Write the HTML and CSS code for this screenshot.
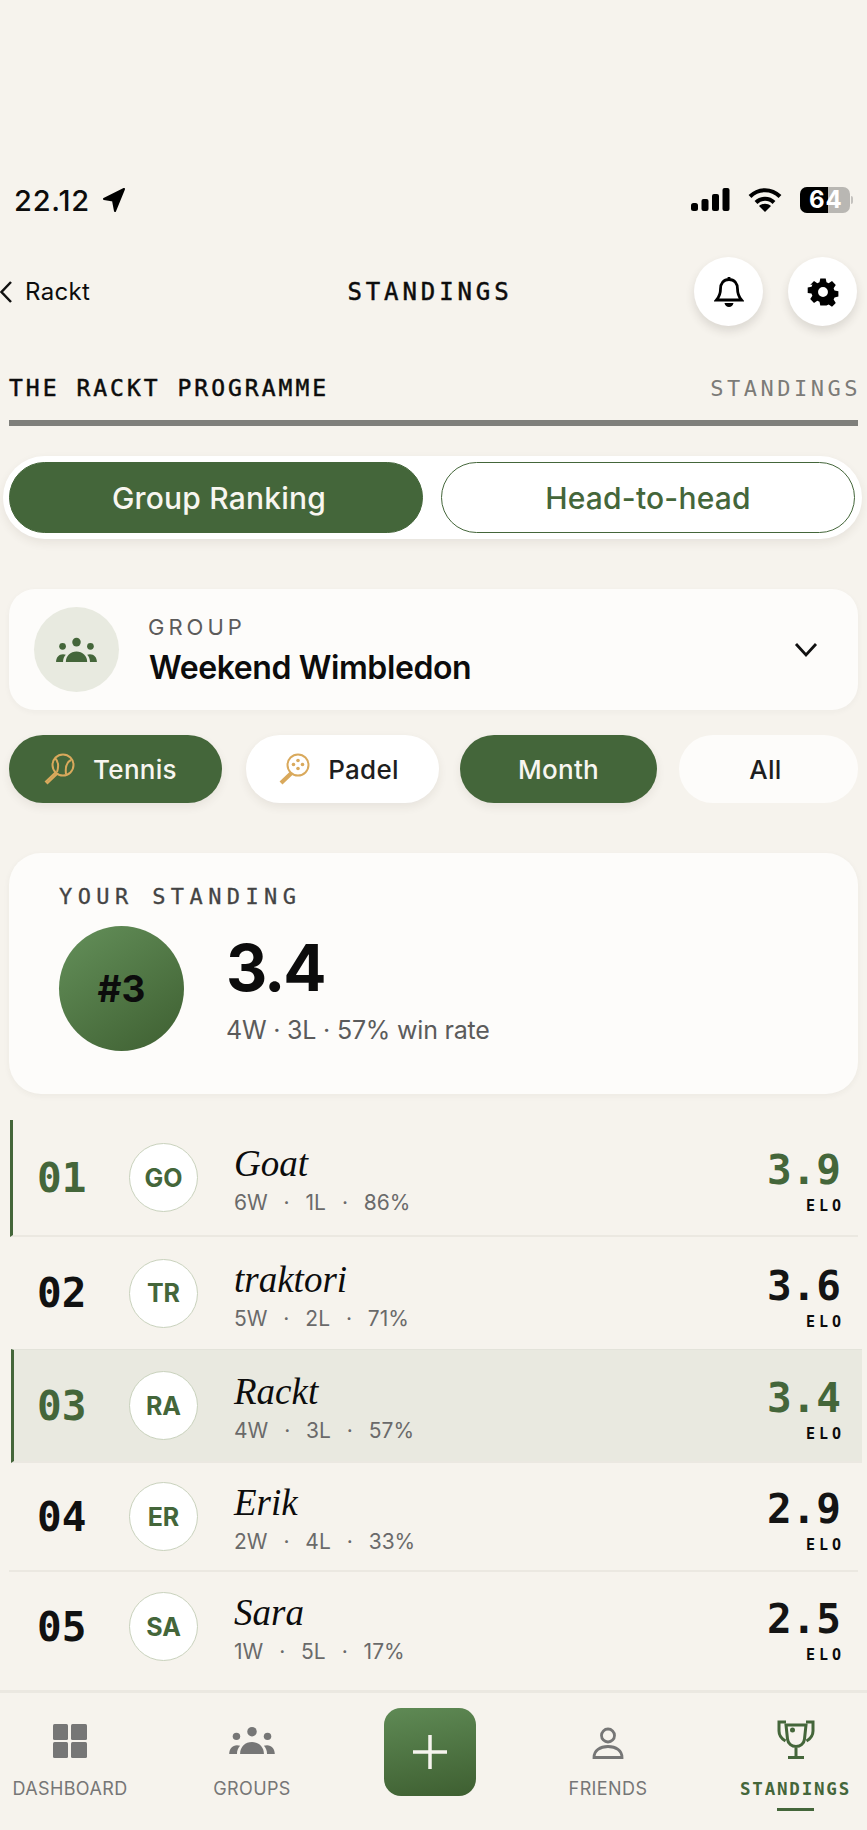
FILE: index.html

```html
<!DOCTYPE html>
<html lang="en">
<head>
  <meta charset="UTF-8" />
  <meta name="viewport" content="width=device-width, initial-scale=1" />
  <title>Rackt - Standings</title>
  <link rel="stylesheet" href="styles.css">
</head>
<body>

<svg class="defs" width="0" height="0" aria-hidden="true">
  <symbol id="people" viewBox="0 0 44 28">
    <circle cx="22" cy="5.500" r="4.600"/>
    <circle cx="7" cy="10" r="3.600"/>
    <circle cx="37" cy="10" r="3.600"/>
    <path d="M10.500 27c0-7 5-11.500 11.500-11.500S33.500 20 33.500 27z"/>
    <path d="M0 27c0-5 3-8.500 7.500-8.500 1.200 0 2.200.2 3 .6C8.500 21 7.500 24 7.500 27z"/>
    <path d="M44 27c0-5-3-8.500-7.500-8.500-1.200 0-2.200.2-3 .6 2 1.900 3 4.900 3 7.900z"/>
  </symbol>
</svg>

<div class="status">
  <div class="status-time">
    <span>22.12</span>
    <svg class="arrow" width="24" height="26" viewBox="0 0 24 26"><path d="M22 2 2 12l9 1.500L13 24z"/></svg>
  </div>
  <div class="status-icons">
    <svg width="39" height="24" viewBox="0 0 39 24">
      <rect x="0" y="15" width="7" height="8" rx="2.500"/>
      <rect x="10.500" y="11" width="7" height="12" rx="2"/>
      <rect x="21" y="6" width="7" height="17" rx="2"/>
      <rect x="31.500" y="0" width="7" height="23" rx="2"/>
    </svg>
    <svg width="34" height="26" viewBox="0 0 34 26">
      <path d="M2 9.500C10.500 1 23.500 1 32 9.500" class="wifi"/>
      <path d="M8 15.500c5-5 13-5 18 0" class="wifi"/>
      <path d="m17 25-6-6c3.500-3 8.500-3 12 0z"/>
    </svg>
    <div class="battery"><span class="battery-fill"></span><span class="battery-num">64</span><span class="battery-tip"></span></div>
  </div>
</div>

<header class="topbar">
  <a href="#" class="back">
    <svg width="13" height="24" viewBox="0 0 13 24"><path d="M11 2 1.500 12 11 22"/></svg>
    Rackt
  </a>
  <h1>STANDINGS</h1>
  <div class="topbar-btns">
    <button class="round-btn" aria-label="Notifications">
      <svg width="30" height="32" viewBox="0 0 30 32"><path d="M15 3.500c-5.500 0-8.500 4-8.500 9.500 0 5-1.500 8-4 11h25c-2.500-3-4-6-4-11 0-5.500-3-9.500-8.500-9.500zM15 1v2.500" class="line"/><path d="M10.500 27h9c-.5 2.500-2.300 4-4.500 4s-4-1.500-4.500-4z"/></svg>
    </button>
    <button class="round-btn" aria-label="Settings">
      <svg width="32" height="32" viewBox="0 0 32 32"><path fill-rule="evenodd" d="M13 1h6l.9 4.300 2.400 1 3.700-2.400 4.200 4.200-2.400 3.700 1 2.400 4.300.9v6l-4.300.9-1 2.400 2.400 3.700-4.200 4.200-3.700-2.400-2.400 1L19 31h-6l-.9-4.300-2.400-1L6 28.100 1.800 23.900l2.400-3.700-1-2.400L-1 17v-6l4.300-.9 1-2.400L1.800 8.100 6 3.900l3.700 2.400 2.400-1zM16 10.500a5.500 5.500 0 1 0 0 11 5.500 5.500 0 0 0 0-11z" transform="translate(1.600 1.600) scale(.9)"/></svg>
    </button>
  </div>
</header>

<div class="section-head">
  <span class="section-left">THE RACKT PROGRAMME</span>
  <span class="section-right">STANDINGS</span>
</div>

<div class="toggle">
  <button class="toggle-btn active">Group Ranking</button>
  <button class="toggle-btn">Head-to-head</button>
</div>

<div class="group-card">
  <div class="group-icon"><svg width="41" height="26"><use href="#people"/></svg></div>
  <div class="group-info">
    <div class="group-label">GROUP</div>
    <div class="group-name">Weekend Wimbledon</div>
  </div>
  <svg class="chevron" width="24" height="16" viewBox="0 0 24 16"><path d="m2 2 10 11L22 2"/></svg>
</div>

<div class="chips">
  <button class="chip chip-tennis active">
    <svg width="32" height="32" viewBox="0 0 32 32" class="racket">
      <circle cx="20" cy="12" r="10.500"/>
      <path d="M12.500 19.500 3 28.500l1.500 1.500 9.500-9"/>
      <path d="M12 5c3 3 4 8 2 14M28 7c-4 2-6 6-5 14"/>
    </svg>
    Tennis
  </button>
  <button class="chip chip-padel">
    <svg width="32" height="32" viewBox="0 0 32 32" class="racket">
      <circle cx="20" cy="12" r="10.500"/>
      <path d="M12.500 19.500 3 28.500l1.500 1.500 9.500-9" class="handle"/>
      <g class="holes"><circle cx="20" cy="7.500" r="1.800"/><circle cx="15.500" cy="11.500" r="1.800"/><circle cx="24.500" cy="11.500" r="1.800"/><circle cx="20" cy="15.500" r="1.800"/></g>
    </svg>
    Padel
  </button>
  <button class="chip chip-month active">Month</button>
  <button class="chip chip-all">All</button>
</div>

<section class="standing">
  <div class="standing-label">YOUR STANDING</div>
  <div class="standing-body">
    <div class="standing-rank">#3</div>
    <div>
      <div class="standing-score">3.4</div>
      <div class="standing-sub">4W · 3L · 57% win rate</div>
    </div>
  </div>
</section>

<main class="list">
  <div class="row row-first top">
    <div class="pos">01</div>
    <div class="avatar">GO</div>
    <div class="player"><div class="player-name">Goat</div><div class="player-stats">6W · 1L · 86%</div></div>
    <div class="elo"><div class="elo-num">3.9</div><div class="elo-label">ELO</div></div>
  </div>
  <div class="row row-second">
    <div class="pos">02</div>
    <div class="avatar">TR</div>
    <div class="player"><div class="player-name">traktori</div><div class="player-stats">5W · 2L · 71%</div></div>
    <div class="elo"><div class="elo-num">3.6</div><div class="elo-label">ELO</div></div>
  </div>
  <div class="row row-me top">
    <div class="pos">03</div>
    <div class="avatar">RA</div>
    <div class="player"><div class="player-name">Rackt</div><div class="player-stats">4W · 3L · 57%</div></div>
    <div class="elo"><div class="elo-num">3.4</div><div class="elo-label">ELO</div></div>
  </div>
  <div class="row row-fourth">
    <div class="pos">04</div>
    <div class="avatar">ER</div>
    <div class="player"><div class="player-name">Erik</div><div class="player-stats">2W · 4L · 33%</div></div>
    <div class="elo"><div class="elo-num">2.9</div><div class="elo-label">ELO</div></div>
  </div>
  <div class="row row-last">
    <div class="pos">05</div>
    <div class="avatar">SA</div>
    <div class="player"><div class="player-name">Sara</div><div class="player-stats">1W · 5L · 17%</div></div>
    <div class="elo"><div class="elo-num">2.5</div><div class="elo-label">ELO</div></div>
  </div>
</main>

<nav class="tabbar">
  <a href="#" class="tab">
    <svg width="36" height="36" viewBox="0 0 36 36"><rect x="1" y="1" width="15" height="16" rx="1.500"/><rect x="19" y="1" width="16" height="16" rx="1.500"/><rect x="1" y="19" width="15" height="16" rx="1.500"/><rect x="19" y="19" width="16" height="16" rx="1.500"/></svg>
    <span>DASHBOARD</span>
  </a>
  <a href="#" class="tab">
    <svg class="tab-people" width="46" height="29"><use href="#people"/></svg>
    <span>GROUPS</span>
  </a>
  <button class="add" aria-label="Add">
    <svg width="36" height="36" viewBox="0 0 36 36"><path d="M18 1v34M1 18h34"/></svg>
  </button>
  <a href="#" class="tab">
    <svg width="32" height="32" viewBox="0 0 32 32"><circle cx="16" cy="8.500" r="6.500" class="line"/><path d="M2 30.500c0-7 6-11 14-11s14 4 14 11z" class="line"/></svg>
    <span>FRIENDS</span>
  </a>
  <a href="#" class="tab tab-active">
    <svg width="38" height="40" viewBox="0 0 38 40" class="trophy"><path d="M9 6h20l-1.500 14C27 25 23 27.500 19 27.500S11 25 10.500 20zM19 27.500V38M11 38.500h16"/><path d="M9 3H2v9c0 5 3 8 6.500 10M29 3h7v9c0 5-3 8-6.500 10"/><circle cx="15.500" cy="11" r="1" class="dot"/></svg>
    <span>STANDINGS</span>
    <i class="tab-bar"></i>
  </a>
</nav>

</body>
</html>
```

FILE: styles.css

```css
/* Base */
* {
  box-sizing: border-box;
}
body {
  font-family: Inter, "Liberation Sans", sans-serif;
  margin: 0;
  width: 867px;
  height: 1830px;
  overflow: hidden;
  background: #f6f3ed;
  color: #0c0c0c;
}
a {
  color: inherit;
  text-decoration: none;
}
button {
  font-family: inherit;
  border: none;
  cursor: pointer;
}
.defs {
  position: absolute;
}

/* Status bar */
.status {
  display: flex;
  justify-content: space-between;
  align-items: center;
  height: 40px;
  margin-top: 180px;
  padding: 0 14px;
}
.status-time {
  display: flex;
  align-items: center;
  gap: 12px;
  font-size: 29px;
  font-weight: 500;
  letter-spacing: 0.8px;
}
.arrow {
  stroke: #000;
  stroke-width: 2;
  stroke-linejoin: round;
}
.status-icons {
  display: flex;
  align-items: center;
  gap: 18px;
}
.wifi {
  fill: none;
  stroke: #000;
  stroke-width: 4;
}
.battery {
  position: relative;
  width: 50px;
  height: 26px;
  margin-right: 3px;
  border-radius: 7px;
  background: #b9b7b3;
}
.battery-fill {
  position: absolute;
  left: 0;
  top: 0;
  bottom: 0;
  width: 28px;
  border-radius: 7px 0 0 7px;
  background: #000;
}
.battery-num {
  position: absolute;
  left: 9px;
  top: 0;
  font-size: 24px;
  line-height: 26px;
  font-weight: 700;
  letter-spacing: 1px;
  color: #fff;
}
.battery-tip {
  position: absolute;
  right: -3px;
  top: 9px;
  width: 2px;
  height: 8px;
  border-radius: 0 2px 2px 0;
  background: #c4c2be;
}

/* Header */
.topbar {
  display: grid;
  grid-template-columns: 1fr auto 1fr;
  align-items: center;
  height: 69px;
  margin-top: 37px;
  padding-right: 10px;
}
.back {
  display: flex;
  align-items: center;
  gap: 12px;
  font-size: 24px;
  letter-spacing: 0.3px;
}
.back svg {
  fill: none;
  stroke: #111;
  stroke-width: 2.500;
}
.topbar h1 {
  margin: 0 0 0 3px;
  font-family: "DejaVu Sans Mono", monospace;
  font-size: 24px;
  font-weight: 400;
  letter-spacing: 3.900px;
  -webkit-text-stroke: 0.5px #111;
}
.topbar-btns {
  display: flex;
  justify-content: flex-end;
  gap: 25px;
}
.round-btn {
  display: flex;
  align-items: center;
  justify-content: center;
  width: 69px;
  height: 69px;
  padding: 0;
  border-radius: 50%;
  background: #fff;
  box-shadow: 0 5px 10px rgba(60, 50, 40, 0.14);
}
.line {
  fill: none;
  stroke: currentColor;
  stroke-width: 2.800;
}

/* Section title */
.section-head {
  display: flex;
  justify-content: space-between;
  align-items: center;
  height: 52px;
  margin: 48px 9px 0;
  padding-bottom: 18px;
  border-bottom: 6px solid #7f7f7b;
  font-family: "DejaVu Sans Mono", monospace;
  font-size: 23px;
  letter-spacing: 3px;
  white-space: nowrap;
}
.section-left {
  -webkit-text-stroke: 0.5px #111;
}
.section-right {
  margin-right: -3px;
  font-size: 22px;
  letter-spacing: 3.500px;
  color: #7c7b78;
}

/* Ranking toggle */
.toggle {
  display: flex;
  gap: 18px;
  margin: 30px 5px 0 3px;
  padding: 6px 7px 6px 6px;
  border-radius: 42px;
  background: #fff;
  box-shadow: 0 4px 10px rgba(60, 50, 40, 0.08);
}
.toggle-btn {
  flex: 1;
  height: 71px;
  border: 1.500px solid #44663a;
  border-radius: 36px;
  background: #fff;
  color: #44663a;
  font-size: 30px;
  font-weight: 500;
  letter-spacing: 0.2px;
}
.toggle-btn.active {
  text-indent: 6px;
  background: #44663a;
  color: #f8f6f0;
}

/* Group selector */
.group-card {
  display: flex;
  align-items: center;
  height: 121px;
  margin: 50px 9px 0;
  padding: 0 40px 0 25px;
  border-radius: 26px;
  background: #fdfcfa;
  box-shadow: 0 2px 6px rgba(60, 50, 40, 0.04);
}
.group-icon {
  display: flex;
  align-items: center;
  justify-content: center;
  flex: none;
  width: 85px;
  height: 85px;
  border-radius: 50%;
  background: #e8eae0;
  fill: #44663a;
}
.group-info {
  flex: 1;
  margin-left: 29px;
}
.group-label {
  font-size: 22px;
  letter-spacing: 4px;
  color: #5c5b5a;
  margin-top: 2px;
}
.group-name {
  margin: 8px 0 0 1px;
  font-size: 32px;
  font-weight: 600;
  letter-spacing: -0.4px;
}
.chevron {
  fill: none;
  stroke: #111;
  stroke-width: 2.800;
}

/* Filter chips */
.chips {
  display: flex;
  margin: 25px 9px 0;
}
.chip {
  display: flex;
  align-items: center;
  justify-content: center;
  gap: 18px;
  height: 68px;
  padding: 0;
  border-radius: 34px;
  background: #fff;
  color: #1e1e1e;
  font-size: 26px;
  font-weight: 500;
  letter-spacing: 0.3px;
  box-shadow: 0 4px 10px rgba(60, 50, 40, 0.08);
}
.chip.active {
  background: #44663a;
  color: #f8f6f0;
}
.chip-tennis {
  width: 213px;
  padding-right: 11px;
}
.chip-padel {
  width: 193px;
  margin-left: 24px;
  padding-right: 8px;
}
.chip-month {
  width: 197px;
  margin-left: 21px;
}
.chip-all {
  width: 179px;
  margin-left: 22px;
  padding-right: 6px;
  background: #fdfcfa;
  box-shadow: none;
}
.racket {
  fill: none;
  stroke: #d9a95c;
  stroke-width: 2;
}
.handle {
  fill: #d9a95c;
}
.holes circle {
  fill: #d9a95c;
  stroke: none;
}

/* Your standing */
.standing {
  height: 241px;
  margin: 50px 9px 0;
  padding: 31px 50px 0;
  border-radius: 32px;
  background: #fdfcfa;
  box-shadow: 0 2px 6px rgba(60, 50, 40, 0.05);
}
.standing-label {
  font-family: "DejaVu Sans Mono", monospace;
  font-size: 22px;
  letter-spacing: 5.400px;
  color: #444;
  line-height: 26px;
  -webkit-text-stroke: 0.3px #444;
}
.standing-body {
  display: flex;
  align-items: center;
  gap: 44px;
  margin-top: 16px;
}
.standing-rank {
  display: flex;
  align-items: center;
  justify-content: center;
  flex: none;
  width: 125px;
  height: 125px;
  border-radius: 50%;
  background: linear-gradient(145deg, #64905a, #3e5f31);
  font-size: 37px;
  font-weight: 700;
}
.standing-score {
  margin-left: -2px;
  font-size: 64px;
  font-weight: 700;
  line-height: 72px;
  letter-spacing: -2px;
}
.standing-sub {
  margin: 11px 0 0 -2px;
  font-size: 25px;
  letter-spacing: -0.2px;
  color: #5b5b5b;
}

/* Player list */
.list {
  margin-top: 26px;
  height: 570px;
}
.row {
  display: flex;
  align-items: center;
  margin: 0 9px;
  padding: 0 17px 0 28px;
  border-bottom: 2px solid #ebe8e1;
}
.row-first {
  height: 117px;
  margin-left: 10px;
  padding-left: 24px;
  border-left: 3px solid #44663a;
}
.row-second {
  height: 112px;
  border-bottom: 0;
}
.row-me {
  height: 114px;
  margin: 0 5px 0 11px;
  padding: 0 21px 0 23px;
  border-top: 1px solid #e3e3da;
  border-left: 3px solid #44663a;
  background: #e9e9e0;
}
.row-fourth {
  height: 109px;
}
.row-last {
  height: 117px;
  padding-bottom: 8px;
  border-bottom: 0;
}
.pos {
  width: 92px;
  font-family: "DejaVu Sans Mono", monospace;
  font-size: 41px;
  font-weight: 700;
  color: #111;
}
.top .pos,
.top .elo-num {
  color: #44663a;
}
.avatar {
  display: flex;
  align-items: center;
  justify-content: center;
  flex: none;
  width: 69px;
  height: 69px;
  margin-right: 36px;
  border: 1.500px solid #c9d2bd;
  border-radius: 50%;
  background: #fff;
  color: #44663a;
  font-size: 25px;
  font-weight: 700;
}
.player {
  flex: 1;
  margin-top: 4px;
}
.player-name {
  font-family: "Liberation Serif", serif;
  font-style: italic;
  font-size: 37px;
  line-height: 42px;
}
.player-stats {
  margin-top: 5px;
  font-size: 21px;
  line-height: 26px;
  word-spacing: 10px;
  color: #6a6a6a;
}
.elo {
  text-align: right;
}
.elo-num {
  font-family: "DejaVu Sans Mono", monospace;
  font-size: 41px;
  font-weight: 700;
  line-height: 44px;
  color: #141414;
  margin-top: 8px;
}
.elo-label {
  margin: 5px -4px 0 0;
  font-family: "DejaVu Sans Mono", monospace;
  font-size: 15px;
  font-weight: 700;
  letter-spacing: 4px;
  line-height: 18px;
}

/* Bottom tabs */
.tabbar {
  display: flex;
  height: 140px;
  border-top: 3px solid #ebe8e1;
}
.tab {
  position: relative;
  display: flex;
  flex-direction: column;
  align-items: center;
  justify-content: flex-end;
  flex: none;
  height: 107px;
  fill: #767676;
  color: #767676;
  font-size: 18px;
  letter-spacing: 0.4px;
}
.tab span {
  margin-top: 19px;
  line-height: 22px;
}
.tab-people {
  margin-bottom: 4px;
}
.tab:nth-child(1) {
  width: 140px;
}
.tab:nth-child(2) {
  width: 224px;
}
.tab:nth-child(4) {
  width: 264px;
}
.tab:nth-child(5) {
  width: 147px;
  margin-left: -18px;
}
.add {
  flex: none;
  display: flex;
  align-items: center;
  justify-content: center;
  width: 92px;
  height: 88px;
  margin: 15px 0 0 20px;
  padding: 0;
  border-radius: 17px;
  background: linear-gradient(170deg, #5f8a55, #3e5f31);
}
.add svg {
  stroke: #f6f4ee;
  stroke-width: 3.500;
  fill: none;
}
.tab-active {
  color: #44663a;
  fill: none;
  font-family: "DejaVu Sans Mono", monospace;
  font-weight: 700;
  font-size: 17.500px;
  letter-spacing: 1.800px;
}
.trophy {
  stroke: #44663a;
  stroke-width: 3;
}
.dot {
  fill: #44663a;
}
.tab-bar {
  position: absolute;
  left: 55px;
  bottom: -11px;
  width: 37px;
  height: 3px;
  background: #44663a;
}
```
